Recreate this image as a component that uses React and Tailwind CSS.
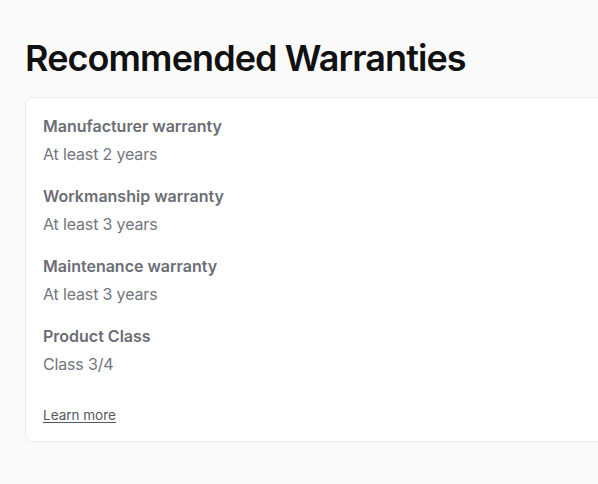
import React from 'react';

const items = [
    { label: 'Manufacturer warranty', value: 'At least 2 years' },
    { label: 'Workmanship warranty', value: 'At least 3 years' },
    { label: 'Maintenance warranty', value: 'At least 3 years' },
    { label: 'Product Class', value: 'Class 3/4' },
];

const App = () => {
    return (
        <div className="min-h-[484px] w-[598px] overflow-hidden bg-[#fafafa] pl-[25px] pt-[36px] font-['Inter',sans-serif]">
            <h1 className="text-[36px] font-semibold leading-[44px] tracking-[-0.025em] text-[#111111]">
                Recommended Warranties
            </h1>
            <div className="mt-[17px] w-[600px] rounded-lg border border-[#ebebeb] bg-white px-[17px] pt-[16px] pb-[15px]">
                <div className="flex flex-col gap-[18px]">
                    {items.map((item) => (
                        <div key={item.label} className="flex flex-col gap-[4px]">
                            <span className="text-[16px] font-semibold leading-[24px] text-[#6b6e75]">{item.label}</span>
                            <span className="text-[16px] leading-[24px] tracking-[-0.01em] text-[#73767c]">{item.value}</span>
                        </div>
                    ))}
                </div>
                <a href="#" className="mt-[29px] inline-block text-[13.5px] leading-[20px] text-[#55585e] underline underline-offset-2">
                    Learn more
                </a>
            </div>
        </div>
    );
};

export default App;
